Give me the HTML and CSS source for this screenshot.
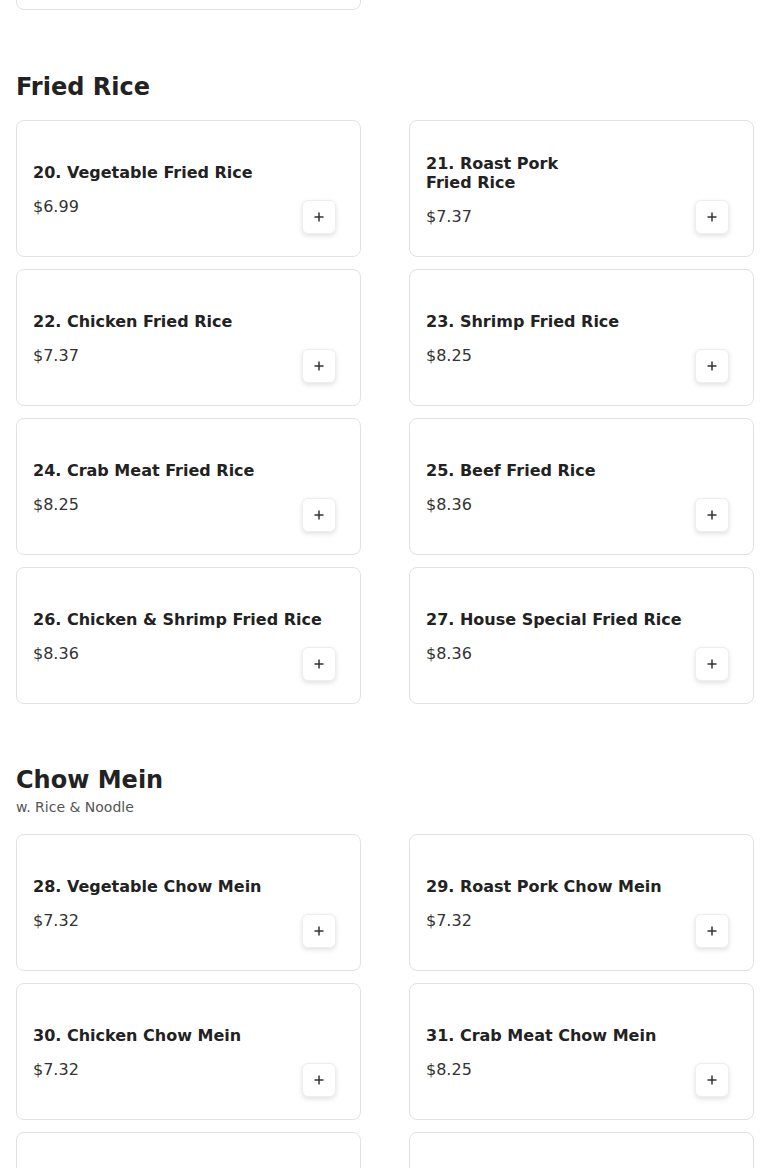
FILE: index.html
```html
<!DOCTYPE html>
<html lang="en">
<head>
    <meta charset="UTF-8">
    <meta name="viewport" content="width=device-width, initial-scale=1.0">
    <title>Menu</title>
    <link rel="stylesheet" href="styles.css">
</head>
<body>
    <div class="menu">
        <section class="menu-section menu-section-cut">
            <div class="item-grid">
                <div class="item-card"></div>
            </div>
        </section>

        <section class="menu-section">
            <h2 class="section-title">Fried Rice</h2>
            <div class="item-grid">
                <div class="item-card">
                    <div class="item-info">
                        <h3 class="item-name">20. Vegetable Fried Rice</h3>
                        <p class="item-price">$6.99</p>
                    </div>
                    <button class="add-button" aria-label="Add"><svg viewBox="0 0 12 12" width="12" height="12"><path d="M6 1.5v9M1.5 6h9" /></svg></button>
                </div>
                <div class="item-card">
                    <div class="item-info">
                        <h3 class="item-name">21. Roast Pork<br>Fried Rice</h3>
                        <p class="item-price">$7.37</p>
                    </div>
                    <button class="add-button" aria-label="Add"><svg viewBox="0 0 12 12" width="12" height="12"><path d="M6 1.5v9M1.5 6h9" /></svg></button>
                </div>
                <div class="item-card">
                    <div class="item-info">
                        <h3 class="item-name">22. Chicken Fried Rice</h3>
                        <p class="item-price">$7.37</p>
                    </div>
                    <button class="add-button" aria-label="Add"><svg viewBox="0 0 12 12" width="12" height="12"><path d="M6 1.5v9M1.5 6h9" /></svg></button>
                </div>
                <div class="item-card">
                    <div class="item-info">
                        <h3 class="item-name">23. Shrimp Fried Rice</h3>
                        <p class="item-price">$8.25</p>
                    </div>
                    <button class="add-button" aria-label="Add"><svg viewBox="0 0 12 12" width="12" height="12"><path d="M6 1.5v9M1.5 6h9" /></svg></button>
                </div>
                <div class="item-card">
                    <div class="item-info">
                        <h3 class="item-name">24. Crab Meat Fried Rice</h3>
                        <p class="item-price">$8.25</p>
                    </div>
                    <button class="add-button" aria-label="Add"><svg viewBox="0 0 12 12" width="12" height="12"><path d="M6 1.5v9M1.5 6h9" /></svg></button>
                </div>
                <div class="item-card">
                    <div class="item-info">
                        <h3 class="item-name">25. Beef Fried Rice</h3>
                        <p class="item-price">$8.36</p>
                    </div>
                    <button class="add-button" aria-label="Add"><svg viewBox="0 0 12 12" width="12" height="12"><path d="M6 1.5v9M1.5 6h9" /></svg></button>
                </div>
                <div class="item-card">
                    <div class="item-info">
                        <h3 class="item-name">26. Chicken &amp; Shrimp Fried Rice</h3>
                        <p class="item-price">$8.36</p>
                    </div>
                    <button class="add-button" aria-label="Add"><svg viewBox="0 0 12 12" width="12" height="12"><path d="M6 1.5v9M1.5 6h9" /></svg></button>
                </div>
                <div class="item-card">
                    <div class="item-info">
                        <h3 class="item-name">27. House Special Fried Rice</h3>
                        <p class="item-price">$8.36</p>
                    </div>
                    <button class="add-button" aria-label="Add"><svg viewBox="0 0 12 12" width="12" height="12"><path d="M6 1.5v9M1.5 6h9" /></svg></button>
                </div>
            </div>
        </section>

        <section class="menu-section">
            <h2 class="section-title">Chow Mein</h2>
            <p class="section-note">w. Rice &amp; Noodle</p>
            <div class="item-grid">
                <div class="item-card">
                    <div class="item-info">
                        <h3 class="item-name">28. Vegetable Chow Mein</h3>
                        <p class="item-price">$7.32</p>
                    </div>
                    <button class="add-button" aria-label="Add"><svg viewBox="0 0 12 12" width="12" height="12"><path d="M6 1.5v9M1.5 6h9" /></svg></button>
                </div>
                <div class="item-card">
                    <div class="item-info">
                        <h3 class="item-name">29. Roast Pork Chow Mein</h3>
                        <p class="item-price">$7.32</p>
                    </div>
                    <button class="add-button" aria-label="Add"><svg viewBox="0 0 12 12" width="12" height="12"><path d="M6 1.5v9M1.5 6h9" /></svg></button>
                </div>
                <div class="item-card">
                    <div class="item-info">
                        <h3 class="item-name">30. Chicken Chow Mein</h3>
                        <p class="item-price">$7.32</p>
                    </div>
                    <button class="add-button" aria-label="Add"><svg viewBox="0 0 12 12" width="12" height="12"><path d="M6 1.5v9M1.5 6h9" /></svg></button>
                </div>
                <div class="item-card">
                    <div class="item-info">
                        <h3 class="item-name">31. Crab Meat Chow Mein</h3>
                        <p class="item-price">$8.25</p>
                    </div>
                    <button class="add-button" aria-label="Add"><svg viewBox="0 0 12 12" width="12" height="12"><path d="M6 1.5v9M1.5 6h9" /></svg></button>
                </div>
                <div class="item-card"></div>
                <div class="item-card"></div>
            </div>
        </section>
    </div>
</body>
</html>
```

FILE: styles.css
```css
body {
    margin: 0;
    font-family: "DejaVu Sans", Verdana, sans-serif;
    background-color: #fff;
    color: #222;
    overflow: hidden;
}

.menu {
    padding: 0 16px;
}

.menu-section {
    margin-top: 61px;
}

/* previous section, scrolled mostly out of view */
.menu-section-cut {
    margin-top: -127px;
    margin-bottom: 62px;
}

.section-title {
    margin: 0;
    font-size: 24px;
    line-height: 30px;
    font-weight: bold;
    color: #222;
}

.section-note {
    margin: 4px 0 0;
    font-size: 14px;
    line-height: 16px;
    color: #555;
}

.item-grid {
    display: grid;
    grid-template-columns: 1fr 1fr;
    column-gap: 48px;
    row-gap: 12px;
    margin-top: 18px;
}

.section-note + .item-grid {
    margin-top: 19px;
}

.menu-section-cut .item-grid {
    margin-top: 0;
}

.item-card {
    position: relative;
    display: flex;
    align-items: center;
    height: 137px;
    box-sizing: border-box;
    padding: 18px 16px 16px;
    border: 1px solid #e2e2e2;
    border-radius: 8px;
    background-color: #fff;
}

.item-info {
    flex: 1;
}

.item-name {
    margin: 0;
    font-size: 16px;
    line-height: 19px;
    font-weight: bold;
    color: #222;
}

.item-price {
    margin: 15px 0 0;
    font-size: 16px;
    line-height: 19px;
    color: #333;
}

.add-button {
    position: absolute;
    right: 24px;
    bottom: 22px;
    display: flex;
    align-items: center;
    justify-content: center;
    width: 34px;
    height: 34px;
    padding: 0;
    border: 1px solid #eee;
    border-radius: 6px;
    background-color: #fff;
    box-shadow: 0 2px 5px rgba(0, 0, 0, 0.12);
    cursor: pointer;
}

.add-button svg {
    stroke: #333;
    stroke-width: 1.5;
    fill: none;
}
```
